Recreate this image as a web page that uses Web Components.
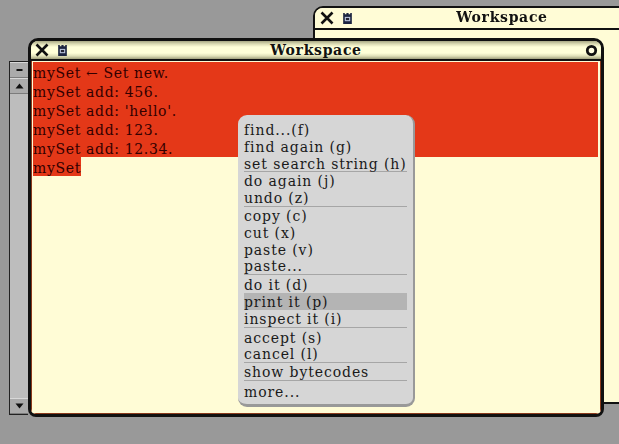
<!DOCTYPE html>
<html><head><meta charset="utf-8"><style>
html,body{margin:0;padding:0;background:#999}
body{width:619px;height:444px;overflow:hidden;position:relative;font-family:"DejaVu Serif",serif;color:#111}
st-desktop{position:absolute;inset:0;filter:blur(.45px)}
st-window{position:absolute}
#back{left:313px;top:6px;width:320px;height:398px}
#front{left:28px;top:38px;width:576px;height:379px}
st-scrollbar{position:absolute;left:9px;top:61px;width:19px;height:354px}
st-menu{position:absolute;left:238px;top:115px}
</style></head><body>
<st-desktop>
<st-window id="back" title="Workspace"></st-window>
<st-scrollbar></st-scrollbar>
<st-window id="front" title="Workspace" active>
<st-code></st-code>
</st-window>
<st-menu></st-menu>
</st-desktop>
<script>
class StWindow extends HTMLElement{
 constructor(){super();const s=this.attachShadow({mode:'open'});
 const active=this.hasAttribute('active');
 s.innerHTML=`<style>
 :host{display:flex;flex-direction:column;box-sizing:border-box;border:3px solid #111;border-radius:10px 10px 8px 8px;background:#fffcd6;overflow:hidden;border-width:${active?3:2}px}
 .bar{flex:none;height:${active?18:20}px;display:flex;align-items:center;position:relative;border-bottom:2px solid #111;
  background:${active?'linear-gradient(#a8a884 0,#dcdcb4 3px,#ffffd8 6px,#ffffd8 12px,#e0e0b8 15px,#a0a07c 100%)':'#fffcd6'};}
 .x{margin-left:${active?4:5}px;width:14px;height:14px;flex:none}
 .doc{margin-left:8px;width:11px;height:13px;flex:none}
 .t{position:absolute;left:0;right:${active?0:-58}px;text-align:center;font:bold 14px/18px "DejaVu Serif",serif;letter-spacing:.7px;top:0;color:#111}
 .o{position:absolute;right:3px;top:3px;width:13px;height:13px}
 .body{flex:1;min-height:0;display:flex;${active?'background:#fffcd6;padding:1px 3px 2px 2px;box-shadow:inset 1px 0 0 #8a3a1c,inset -1px 0 0 #8a3a1c,inset 0 -1px 0 #8a3a1c;':''}}
 </style>
 <div class="bar" part="bar">
 <svg class="x" viewBox="0 0 14 14"><path d="M1.5 1.5 12.5 12.5M12.5 1.5 1.5 12.5" stroke="#111" stroke-width="2.6" fill="none"/></svg>
 <svg class="doc" viewBox="0 0 10 12"><path d="M1 1h1.5v1H4V1h2v1h1.5V1H9v10H1z" fill="#1c2440"/><rect x="2.5" y="4.5" width="5" height="4" fill="#b9c4dc"/><rect x="3.5" y="5.5" width="3" height="2" fill="#223"/></svg>
 <div class="t">${this.getAttribute('title')}</div>
 ${active?'<svg class="o" viewBox="0 0 13 13"><circle cx="6.5" cy="6.5" r="4.2" fill="#fffce0" stroke="#111" stroke-width="2.8"/></svg>':''}
 </div><div class="body"><slot></slot></div>`;}
}
class StCode extends HTMLElement{
 constructor(){super();const s=this.attachShadow({mode:'open'});
 const lines=["mySet ← Set new.","mySet add: 456.","mySet add: 'hello'.","mySet add: 123.","mySet add: 12.34."];
 s.innerHTML=`<style>
 :host{display:block;flex:1;font:14px/19px "DejaVu Serif",serif;color:#300;letter-spacing:.65px}
 .sel{background:#e43818;height:95px}
 .l{height:19px;white-space:pre;line-height:23px}
 .last{display:inline-block;background:#e43818;height:19px;line-height:23px;overflow:hidden;vertical-align:top}
 </style><div class="sel">${lines.map(l=>`<div class="l">${l}</div>`).join('')}</div><span class="last">mySet</span>`;}
}
class StScrollbar extends HTMLElement{
 constructor(){super();const s=this.attachShadow({mode:'open'});
 s.innerHTML=`<style>
 :host{display:flex;flex-direction:column;box-sizing:border-box;border:1px solid #222;border-right:0;background:#bdbdbd}
 .b{flex:none;height:14px;background:#ababab;border-top:1px solid #d8d8d8;border-bottom:1px solid #7c7c7c;display:flex;align-items:center;justify-content:center}
 .t{flex:1;background:#bdbdbd}
 svg{width:9px;height:6px}
 </style>
 <div class="b"><svg viewBox="0 0 9 6"><rect x="1.5" y="2" width="6" height="2" fill="#111"/></svg></div>
 <div class="b"><svg viewBox="0 0 9 6"><path d="M0.5 5.5h8L4.5 .5z" fill="#111"/></svg></div>
 <div class="t"></div>
 <div class="b"><svg viewBox="0 0 9 6"><path d="M0.5 .5h8L4.5 5.5z" fill="#111"/></svg></div>`;}
}
class StMenu extends HTMLElement{
 constructor(){super();const s=this.attachShadow({mode:'open'});
 const g=[["find...(f)","find again (g)","set search string (h)"],["do again (j)","undo (z)"],["copy (c)","cut (x)","paste (v)","paste..."],["do it (d)","print it (p)","inspect it (i)"],["accept (s)","cancel (l)"],["show bytecodes"],["more..."]];
 s.innerHTML=`<style>
 :host{display:block;box-sizing:border-box;width:177px;height:292px;background:#d6d6d6;border-radius:9px;padding:6px 6px 0 6px;border-right:2px solid #999;border-bottom:3px solid #999;font:14px/17px "DejaVu Serif",serif;color:#1a1a1a;letter-spacing:.9px}
 .g{border-bottom:1px solid #a6a6a6}
 .g:nth-child(5),.g:nth-child(6){padding-top:1px}
 .g:last-child{border:0;padding-top:2px}
 .i{height:16.8px;white-space:pre;padding-left:0;line-height:18px}
 .i.h{background:#b4b4b4}
 </style>${g.map(a=>`<div class="g">${a.map(t=>`<div class="i${t.startsWith('print')?' h':''}">${t}</div>`).join('')}</div>`).join('')}`;}
}
customElements.define('st-desktop',class extends HTMLElement{constructor(){super();this.attachShadow({mode:'open'}).innerHTML='<style>:host{display:block}</style><slot></slot>'}});
customElements.define('st-window',StWindow);
customElements.define('st-code',StCode);
customElements.define('st-scrollbar',StScrollbar);
customElements.define('st-menu',StMenu);
</script></body></html>
